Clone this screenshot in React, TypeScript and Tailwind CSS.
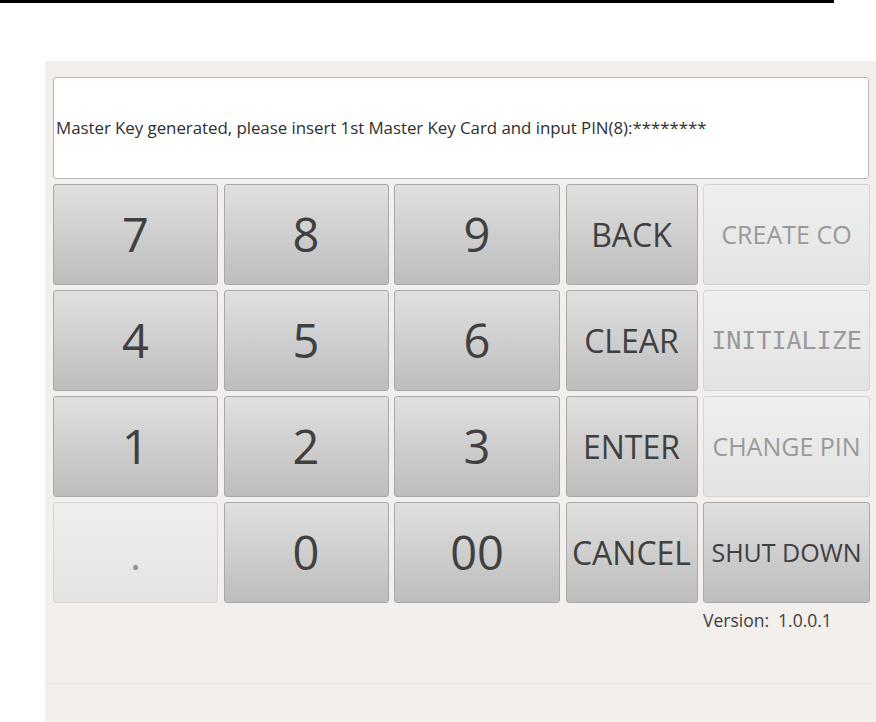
const keys: { label: string; kind: "num" | "cmd" | "off" | "offmono" }[] = [
  { label: "7", kind: "num" },
  { label: "8", kind: "num" },
  { label: "9", kind: "num" },
  { label: "BACK", kind: "cmd" },
  { label: "CREATE CO", kind: "off" },
  { label: "4", kind: "num" },
  { label: "5", kind: "num" },
  { label: "6", kind: "num" },
  { label: "CLEAR", kind: "cmd" },
  { label: "INITIALIZE", kind: "offmono" },
  { label: "1", kind: "num" },
  { label: "2", kind: "num" },
  { label: "3", kind: "num" },
  { label: "ENTER", kind: "cmd" },
  { label: "CHANGE PIN", kind: "off" },
  { label: ".", kind: "off" },
  { label: "0", kind: "num" },
  { label: "00", kind: "num" },
  { label: "CANCEL", kind: "cmd" },
  { label: "SHUT DOWN", kind: "cmd" },
];

const Key = ({ label, kind }: { label: string; kind: string }) => {
  const off = kind === "off" || kind === "offmono";
  const base = off
    ? "bg-gradient-to-b from-[#efefef] to-[#e3e3e3] border-[#d6d4d3] text-[#9a9a9a]"
    : "bg-gradient-to-b from-[#e0e0e0] to-[#bdbdbd] border-[#a9a9a9] text-[#404040]";
  let size = "text-[27px]";
  if (kind === "num") size = "text-[47px]";
  else if (kind === "cmd") size = label === "SHUT DOWN" ? "text-[25px]" : "text-[32px]";
  else if (kind === "offmono") size = "text-[25px] font-['DejaVu_Sans_Mono',monospace]";
  else if (label === ".") size = "text-[40px] text-[#909090] pt-[4px]";
  else size = "text-[25px]";
  return (
    <div
      className={`flex items-center justify-center rounded-[3px] border ${base} ${size} leading-none whitespace-nowrap`}
    >
      {label}
    </div>
  );
};

export default function App() {
  return (
    <div className="w-[876px] h-[722px] bg-white font-['Open_Sans',sans-serif] relative overflow-hidden">
      <div className="h-[3px] w-[834px] bg-black" />
      <div className="mt-[58px] ml-[45px] h-[661px] bg-[#f2efed] flex flex-col pl-[8px] pr-[7px] pt-[16px]">
        <div className="h-[102px] rounded-[3px] border border-[#b8b6b5] bg-white flex items-center pl-[2px] text-[16.9px] tracking-[-0.05px] text-[#2f2f2f]">
          Master Key generated, please insert 1st Master Key Card and input PIN(8):********
        </div>
        <div className="mt-[5px] grid grid-cols-[165px_165px_166px_132px_167px] grid-rows-[101px_101px_101px_101px] gap-x-[5.5px] gap-y-[5px]">
          {keys.map((k, i) => (
            <Key key={i} label={k.label} kind={k.kind} />
          ))}
        </div>
        <div className="mt-[6px] pl-[650px] text-[17.5px] text-[#404040] leading-[22px] flex">
          <span>Version:</span>
          <span className="ml-[9px]">1.0.0.1</span>
        </div>
        <div className="mt-auto mb-[38px] -ml-[8px] -mr-[7px] h-px bg-[#ebe8e6]" />
      </div>
    </div>
  );
}
